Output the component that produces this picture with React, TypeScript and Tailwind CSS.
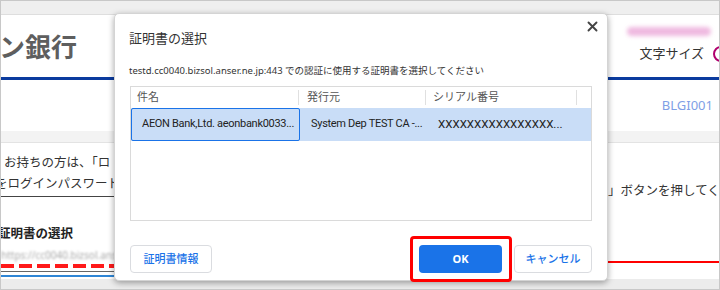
import React from "react";

const F = { fontFamily: '"Noto Sans", "Noto Sans CJK JP", sans-serif' };
const R = { fontFamily: 'Roboto, "Noto Sans CJK JP", sans-serif' };

function CloseIcon() {
  return (
    <svg width="11" height="11" viewBox="0 0 11 11">
      <path d="M1.5 1.5 L9.5 9.5 M9.5 1.5 L1.5 9.5" stroke="#444" strokeWidth="1.9" strokeLinecap="round" />
    </svg>
  );
}

function Dialog() {
  return (
    <div className="absolute left-[113px] top-[12px] w-[494px] h-[268px] bg-white rounded-[5px] border border-[#d4d4d4] shadow-[0_2px_6px_rgba(0,0,0,0.35)] flex flex-col px-[15px]">
      <div className="flex items-start justify-between pt-[15px]">
        <div className="text-[13px] leading-[18px] text-[#333] ml-[-1px]">証明書の選択</div>
        <div className="mt-[-8px] mr-[-6px]"><CloseIcon /></div>
      </div>
      <div className="mt-[17px] text-[9.5px] leading-[14px] text-[#333] ml-[-1px] whitespace-nowrap">
        testd.cc0040.bizsol.anser.ne.jp:443 での認証に使用する証明書を選択してください
      </div>
      <div className="mt-[8px] h-[135px] border border-[#dadada] flex flex-col">
        <div className="h-[21px] flex items-center text-[11px] text-[#555]">
          <div className="w-[168px] flex items-center justify-between pl-[6px]">
            <span>件名</span>
            <span className="w-[1px] h-[15px] bg-[#e0e0e0]" />
          </div>
          <div className="w-[127px] flex items-center justify-between pl-[8px]">
            <span>発行元</span>
            <span className="w-[1px] h-[15px] bg-[#e0e0e0]" />
          </div>
          <div className="w-[151px] flex items-center justify-between pl-[7px]">
            <span>シリアル番号</span>
            <span className="w-[1px] h-[15px] bg-[#e0e0e0]" />
          </div>
        </div>
        <div style={R} className="h-[33px] bg-[#c9ddf7] flex items-center text-[11px] tracking-[-0.3px] text-[#222] whitespace-nowrap">
          <div className="w-[169px] h-full flex items-center pl-[10px] border border-[#1a73e8] rounded-[2px] overflow-hidden">AEON Bank,Ltd. aeonbank0033...</div>
          <div className="w-[127px] h-full flex items-center pl-[11px] overflow-hidden">System Dep TEST CA -...</div>
          <div className="w-[151px] h-full flex items-center pl-[11px] overflow-hidden text-[11.5px] tracking-normal">XXXXXXXXXXXXXXXX...</div>
        </div>
      </div>
      <div className="mt-[24px] flex items-center">
        <button className="w-[82px] h-[28px] rounded-[4px] border border-[#dadce0] bg-white text-[11px] text-[#1a73e8] font-medium">証明書情報</button>
        <div className="flex-1" />
        <div className="relative">
          <button className="w-[83px] h-[28px] rounded-[4px] bg-[#1a73e8] text-white text-[11px] font-bold">OK</button>
          <div className="absolute left-[-9px] top-[-9px] w-[102px] h-[46px] border-[3px] border-[#ff0000] rounded-[4px]" />
        </div>
        <button className="ml-[12px] w-[78px] h-[28px] rounded-[4px] border border-[#dadce0] bg-white text-[11px] text-[#1a73e8] font-medium">キャンセル</button>
      </div>
    </div>
  );
}

export default function App() {
  return (
    <div style={F} className="relative w-[720px] h-[290px] overflow-hidden bg-[#efefef] border border-[#c8c8c8]">
      <div className="h-[13px] bg-[#efefef]" />
      {/* header */}
      <div className="bg-white border-t border-[#dedede]">
        <div className="h-[62px] flex justify-between">
          <div className="pt-[15px] text-[26px] leading-[34px] font-bold text-[#5e5e5e] ml-[-2px]">ン銀行</div>
          <div className="flex flex-col items-end pt-[12px]">
            <div className="w-[84px] h-[9px] mr-[8px] rounded-full bg-[#efb9e0] blur-[2px]" />
            <div className="flex items-center mt-[8px] mr-[-10px]">
              <span className="text-[13px] text-[#333]">文字サイズ</span>
              <span className="ml-[9px] w-[16px] h-[16px] rounded-full border-[2px] border-[#b0006e]" />
            </div>
          </div>
        </div>
        <div className="h-[3px] bg-[#0b3b9e]" />
        <div className="h-[51px] flex justify-end items-start pt-[16px] pr-[6px]">
          <span className="text-[13px] text-[#7f9fe6]">BLGI001</span>
        </div>
      </div>
      <div className="h-[12px] bg-[#f3f3f3] border-b border-[#e3e3e3]" />
      {/* content */}
      <div className="bg-white h-[136px] flex">
        <div className="w-[113px] flex flex-col overflow-hidden">
          <div className="mt-[9px] text-[12.5px] leading-[21px] text-[#333] whitespace-nowrap pl-[3px]">お持ちの方は、「ロ</div>
          <div className="text-[12.5px] leading-[21px] text-[#333] whitespace-nowrap ml-[-6px]">をログインパスワード</div>
          <div className="mt-[2px] h-[1px] bg-[#444]" />
          <div className="mt-[28px] text-[12.5px] font-bold text-[#222] whitespace-nowrap ml-[-3px]">証明書の選択</div>
          <div className="mt-[4px] text-[10px] text-[#aaa] blur-[1px] whitespace-nowrap">https://cc0040.bizsol.anser.ne.jp</div>
          <div className="mt-[1px] h-[4px] bg-[repeating-linear-gradient(90deg,#ff1a1a_0_13px,transparent_13px_18px)]" />
          <div className="mt-[3px] h-[1px] bg-[#666]" />
          <div className="mt-[3px] h-[2px] bg-[#2f86d6]" />
        </div>
        <div className="flex-1" />
        <div className="w-[113px] flex flex-col overflow-hidden">
          <div className="mt-[37px] text-[12.5px] leading-[21px] text-[#333] whitespace-nowrap ml-[2px]">」ボタンを押してくだ</div>
          <div className="mt-[60px] h-[2px] bg-[#ff0000]" />
        </div>
      </div>
      <div className="h-[12px] bg-[#ececec]" />
      <Dialog />
    </div>
  );
}
